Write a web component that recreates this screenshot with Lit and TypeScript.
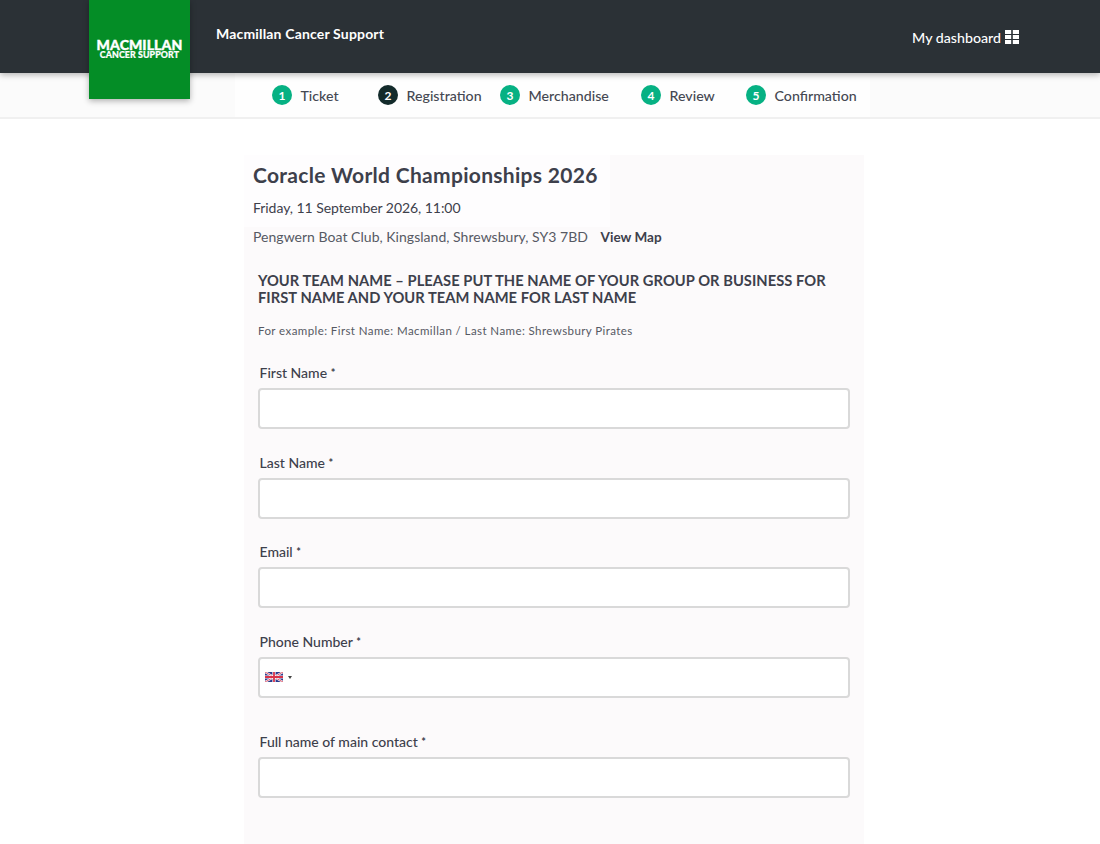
import { LitElement, html, css } from "lit";
import { customElement } from "lit/decorators.js";

const STEPS = [
    { n: 1, label: "Ticket", width: 106, current: false },
    { n: 2, label: "Registration", width: 122, current: true },
    { n: 3, label: "Merchandise", width: 141, current: false },
    { n: 4, label: "Review", width: 105, current: false },
    { n: 5, label: "Confirmation", width: 126, current: false }
];

@customElement("app-root")
export class AppRoot extends LitElement
{
    static styles = css`
        :host
        {
            display     : block;
            height      : 844px;
            overflow    : hidden;
            position    : relative;
            background  : #ffffff;
            font-family : Lato, "Liberation Sans", sans-serif;
            color       : #3d404b;
        }

        .topbar
        {
            height          : 73px;
            box-sizing      : border-box;
            padding         : 0 81px 0 216px;
            display         : flex;
            justify-content : space-between;
            background      : #2b3136;
            color           : #ffffff;
            box-shadow      : 0 2px 6px rgba(0, 0, 0, 0.28);
            position        : relative;
        }

        .org
        {
            margin-top     : 25px;
            font-size      : 14px;
            line-height    : 18px;
            font-weight    : 700;
            letter-spacing : 0.17px;
        }

        .dash
        {
            margin-top  : 28px;
            height      : 18px;
            display     : flex;
            align-items : center;
            gap         : 4px;
            font-size   : 14.2px;
            font-weight : 500;
        }

        .dash svg
        {
            margin-top : -1px;
        }

        .logo
        {
            position        : absolute;
            left            : 89px;
            top             : 0;
            width           : 101px;
            height          : 99px;
            z-index         : 2;
            display         : flex;
            flex-direction  : column;
            align-items     : center;
            padding-top     : 39px;
            box-sizing      : border-box;
            background      : #048d26;
            color           : #ffffff;
            box-shadow      : 0 2px 6px rgba(0, 0, 0, 0.3);
            font-weight     : 900;
            text-transform  : uppercase;
        }

        .logo b
        {
            font-size          : 14px;
            line-height        : 11px;
            font-weight        : 900;
            letter-spacing     : 0.1px;
            -webkit-text-stroke: 0.4px #ffffff;
        }

        .logo span
        {
            margin-top         : 1px;
            font-size          : 8.8px;
            line-height        : 8px;
            letter-spacing     : 0.1px;
            -webkit-text-stroke: 0.2px #ffffff;
        }

        .stepbar
        {
            height        : 46px;
            box-sizing    : border-box;
            display       : flex;
            background    : #fbfbfb;
            border-bottom : 2px solid #f0f0f0;
        }

        .steps
        {
            width        : 635px;
            margin-left  : 235px;
            box-sizing   : border-box;
            padding-left : 37px;
            display      : flex;
            align-items  : center;
            background   : #fefefe;
        }

        .step
        {
            flex        : none;
            display     : flex;
            align-items : center;
            gap         : 8.5px;
            font-size   : 14.2px;
            font-weight : 500;
            color       : #454852;
        }

        .num
        {
            flex            : none;
            width           : 20px;
            height          : 20px;
            border-radius   : 50%;
            display         : flex;
            align-items     : center;
            justify-content : center;
            background      : #06b183;
            color           : #ffffff;
            font-size       : 12px;
            font-weight     : 700;
        }

        .step.current .num
        {
            background : #132b2b;
        }

        .panel
        {
            width       : 620px;
            height      : 689px;
            margin      : 36px 0 0 244px;
            background  : #fcfafb;
        }

        .event
        {
            width      : 366px;
            height     : 72px;
            box-sizing : border-box;
            padding    : 7px 0 0 9px;
            background : #fefdfe;
        }

        h1
        {
            margin         : 0;
            font-size      : 21px;
            line-height    : 26px;
            font-weight    : 700;
            letter-spacing : 0.3px;
            color          : #3d404b;
        }

        .date
        {
            margin-top     : 10px;
            font-size      : 14px;
            line-height    : 20px;
            letter-spacing : -0.05px;
        }

        .venue
        {
            padding-left   : 9px;
            height         : 20px;
            font-size      : 14px;
            line-height    : 20px;
            letter-spacing : 0.03px;
            color          : #565963;
        }

        .venue a
        {
            margin-left : 9px;
            font-size   : 13.5px;
            font-weight : 700;
            color       : #3d404b;
        }

        .form
        {
            padding : 25px 14px 0;
        }

        h2
        {
            margin         : 0;
            font-size      : 14.7px;
            line-height    : 17px;
            font-weight    : 700;
            letter-spacing : 0.05px;
            color          : #3d404b;
        }

        .hint
        {
            margin         : 16px 0 0;
            padding-bottom : 0.5px;
            font-size      : 11.5px;
            line-height    : 17px;
            letter-spacing : 0.42px;
            color          : #565963;
        }

        .field
        {
            margin-top : 24.5px;
        }

        .field.contact
        {
            margin-top : 35px;
        }

        label
        {
            display       : block;
            padding-left  : 1.5px;
            margin-bottom : 6px;
            font-size     : 14px;
            line-height   : 18px;
            font-weight   : 500;
            color         : #3d404b;
        }

        .req
        {
            font-size      : 11px;
            font-weight    : 700;
            vertical-align : 1px;
        }

        .box
        {
            width         : 592px;
            height        : 41px;
            box-sizing    : border-box;
            display       : flex;
            align-items   : center;
            background    : #ffffff;
            border        : 2px solid #d9d9d9;
            border-radius : 4px;
        }

        .box input
        {
            flex       : 1;
            min-width  : 0;
            height     : 100%;
            padding    : 0 10px;
            border     : 0;
            outline    : 0;
            background : transparent;
        }

        .flag
        {
            flex   : none;
            margin : 0 0 0 5px;
        }

        .caret
        {
            flex         : none;
            margin-left  : 5px;
            width        : 0;
            height       : 0;
            border-left  : 2.5px solid transparent;
            border-right : 2.5px solid transparent;
            border-top   : 3px solid #444444;
        }
    `;

    renderField (name: string, cls = "")
    {
        return html`
            <div class="field ${ cls }">
                <label>${ name } <span class="req">*</span></label>
                <div class="box"><input type="text" aria-label="${ name }"></div>
            </div>
        `;
    }

    render ()
    {
        return html`
            <header class="topbar">
                <div class="org">Macmillan Cancer Support</div>
                <div class="dash">
                    My dashboard
                    <svg width="14" height="14" viewBox="0 0 14 14" fill="#ffffff">
                        <rect x="0" y="0" width="6.2" height="4"></rect>
                        <rect x="7.8" y="0" width="6.2" height="4"></rect>
                        <rect x="0" y="5" width="6.2" height="4"></rect>
                        <rect x="7.8" y="5" width="6.2" height="4"></rect>
                        <rect x="0" y="10" width="6.2" height="4"></rect>
                        <rect x="7.8" y="10" width="6.2" height="4"></rect>
                    </svg>
                </div>
            </header>

            <div class="logo"><b>Macmillan</b><span>Cancer Support</span></div>

            <nav class="stepbar">
                <div class="steps">
                    ${ STEPS.map( step => html`
                        <div class="step ${ step.current ? "current" : "" }" style="width:${ step.width }px">
                            <span class="num">${ step.n }</span>${ step.label }
                        </div>
                    ` ) }
                </div>
            </nav>

            <main class="panel">
                <div class="event">
                    <h1>Coracle World Championships 2026</h1>
                    <div class="date">Friday, 11 September 2026, 11:00</div>
                </div>
                <div class="venue">Pengwern Boat Club, Kingsland, Shrewsbury, SY3 7BD <a>View Map</a></div>

                <section class="form">
                    <h2>YOUR TEAM NAME – PLEASE PUT THE NAME OF YOUR GROUP OR BUSINESS FOR FIRST NAME AND YOUR TEAM NAME FOR LAST NAME</h2>
                    <p class="hint">For example: First Name: Macmillan / Last Name: Shrewsbury Pirates</p>

                    ${ this.renderField( "First Name" ) }
                    ${ this.renderField( "Last Name" ) }
                    ${ this.renderField( "Email" ) }

                    <div class="field">
                        <label>Phone Number <span class="req">*</span></label>
                        <div class="box">
                            <svg class="flag" width="18" height="10" viewBox="0 0 18 10">
                                <rect width="18" height="10" fill="#2b3a8c"></rect>
                                <path d="M0 0L18 10M18 0L0 10" stroke="#ffffff" stroke-width="2"></path>
                                <path d="M0 0L18 10M18 0L0 10" stroke="#d8334a" stroke-width="0.8"></path>
                                <path d="M9 0V10M0 5H18" stroke="#ffffff" stroke-width="3.2"></path>
                                <path d="M9 0V10M0 5H18" stroke="#d8334a" stroke-width="1.8"></path>
                            </svg>
                            <span class="caret"></span>
                            <input type="tel" aria-label="Phone Number">
                        </div>
                    </div>

                    ${ this.renderField( "Full name of main contact", "contact" ) }
                </section>
            </main>
        `;
    }
}
